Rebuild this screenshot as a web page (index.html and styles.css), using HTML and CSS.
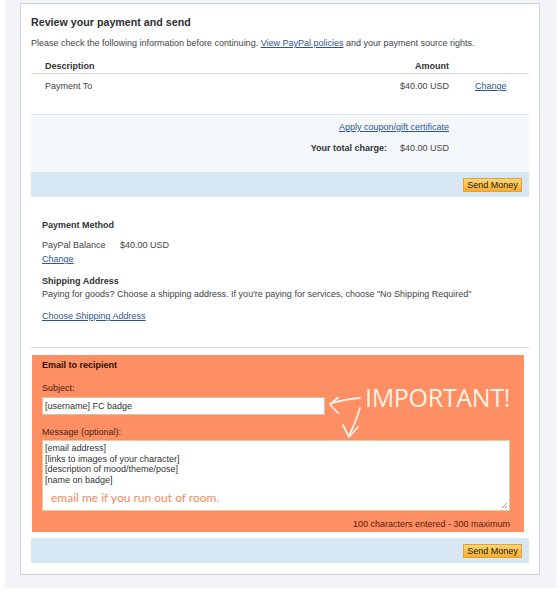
FILE: index.html
```html
<!DOCTYPE html>
<html>
<head>
<meta charset="utf-8">
<link rel="stylesheet" href="styles.css">
</head>
<body>
<div class="page">
  <div class="panel">
    <h1 class="title">Review your payment and send</h1>
    <p class="intro">Please check the following information before continuing. <a href="#">View PayPal policies</a> and your payment source rights.</p>

    <div class="row head">
      <div class="desc">Description</div>
      <div class="amt">Amount</div>
      <div class="act"></div>
    </div>
    <div class="row item">
      <div class="desc">Payment To</div>
      <div class="amt">$40.00 USD</div>
      <div class="act"><a href="#">Change</a></div>
    </div>

    <div class="summary">
      <div class="sum-line"><a href="#">Apply coupon/gift certificate</a></div>
      <div class="sum-line total"><span class="total-label">Your total charge:</span><span>$40.00 USD</span></div>
    </div>

    <div class="bar"><button class="btn">Send Money</button></div>

    <div class="method">
      <div class="sec-title">Payment Method</div>
      <div class="pm-line"><span class="pm-label">PayPal Balance</span><span>$40.00 USD</span></div>
      <div class="pm-line"><a href="#">Change</a></div>
      <div class="sec-title ship">Shipping Address</div>
      <div class="ship-text">Paying for goods? Choose a shipping address. If you're paying for services, choose "No Shipping Required"</div>
      <div class="ship-link"><a href="#">Choose Shipping Address</a></div>
    </div>

    <div class="divider"></div>

    <div class="email">
      <div class="email-title">Email to recipient</div>
      <div class="label subj">Subject:</div>
      <div class="input">[username] FC badge</div>
      <div class="label msg">Message (optional):</div>
      <div class="textarea">
        <div>[email address]</div>
        <div>[links to images of your character]</div>
        <div>[description of mood/theme/pose]</div>
        <div>[name on badge]</div>
        <div class="note">email me if you run out of room.</div>
        <svg class="grip" width="8" height="8" viewBox="0 0 8 8"><path d="M7 2 L2 7 M7 5 L5 7" stroke="#9a9a9a" stroke-width="1"/></svg>
      </div>
      <div class="counter">100 characters entered - 300 maximum</div>

      <svg class="arrows" width="40" height="48" viewBox="0 0 40 48">
        <path d="M35 4 Q20 5 6 9.5" />
        <path d="M13 3.5 L5 10.5 L13 19" />
        <path d="M35 14 Q31 28 24 42" />
        <path d="M18 31 L24 43 L33 33" />
      </svg>
      <div class="important">IMPORTANT!</div>
    </div>

    <div class="bar bar2"><button class="btn">Send Money</button></div>
  </div>
</div>
</body>
</html>
```

FILE: styles.css
```css
html, body {
  margin: 0;
  padding: 0;
  background: #ffffff;
}
body {
  font-family: "Liberation Sans", Arial, sans-serif;
  font-size: 9px;
  color: #444444;
}
a {
  color: #2f5590;
  text-decoration: underline;
}
.page {
  margin-left: 5px;
  width: 552px;
  box-sizing: border-box;
  background: #f3f4f7;
  padding: 3px 16px 13px 15px;
}
.panel {
  width: 520px;
  box-sizing: border-box;
  background: #ffffff;
  border: 1px solid #cfd4dc;
  padding: 0 10px 11px 10px;
}
.title {
  margin: 12px 0 0 0;
  font-size: 10.7px;
  line-height: 13px;
  font-weight: bold;
  color: #2e2e2e;
}
.intro {
  margin: 8px 0 0 0;
  line-height: 12px;
}
.row {
  display: flex;
  align-items: center;
}
.row .desc {
  flex: 1;
  padding-left: 14px;
}
.row .amt {
  text-align: right;
}
.row .act {
  width: 54px;
  padding-left: 26px;
}
.head {
  margin-top: 10px;
  height: 14px;
  line-height: 14px;
  font-weight: bold;
  color: #333333;
  border-bottom: 1px solid #d9dde3;
}
.item {
  height: 40px;
  align-items: flex-start;
  padding-top: 6px;
  box-sizing: border-box;
  line-height: 12px;
}
.summary {
  border-top: 1px solid #dfe5ec;
  background: #f4f8fb;
  padding: 6px 80px 18px 0;
}
.sum-line {
  display: flex;
  justify-content: flex-end;
  line-height: 12px;
}
.total {
  margin-top: 9px;
  gap: 13px;
}
.total-label {
  font-weight: bold;
  color: #333333;
}
.bar {
  height: 25px;
  background: #d7e6f3;
  display: flex;
  align-items: center;
  justify-content: flex-end;
  padding-right: 7px;
}
.btn {
  height: 14px;
  width: 59px;
  padding: 0;
  border: 1px solid #e1a13c;
  background: linear-gradient(#ffd775, #f7ac2b);
  font-family: "Liberation Sans", Arial, sans-serif;
  font-size: 9px;
  line-height: 12px;
  color: #222222;
  cursor: pointer;
}
.method {
  padding-left: 11px;
  padding-top: 22px;
}
.sec-title {
  font-weight: bold;
  color: #333333;
  line-height: 12px;
}
.pm-line {
  line-height: 14px;
}
.pm-line:nth-of-type(2) {
  margin-top: 7px;
}
.pm-label {
  display: inline-block;
  width: 78px;
}
.ship {
  margin-top: 9px;
  line-height: 13px;
}
.ship-text {
  line-height: 13px;
}
.ship-link {
  margin-top: 9px;
  line-height: 12px;
}
.divider {
  margin-top: 25px;
  height: 1px;
  background: #d9dde3;
}
.email {
  position: relative;
  margin: 7px 5px 0 1px;
  background: #fe8e63;
  padding: 4px 14px 2px 10px;
}
.email-title {
  font-weight: bold;
  color: #2a1207;
  line-height: 12px;
}
.label {
  color: #4a2312;
  line-height: 12px;
}
.subj {
  margin-top: 11px;
}
.input {
  margin-top: 3px;
  width: 283px;
  height: 18px;
  box-sizing: border-box;
  background: #ffffff;
  border: 1px solid #d8c2ae;
  padding-left: 2px;
  line-height: 16px;
  color: #333333;
}
.msg {
  margin-top: 11px;
}
.textarea {
  position: relative;
  margin-top: 2px;
  height: 71px;
  box-sizing: border-box;
  background: #ffffff;
  border: 1px solid #e7c99a;
  padding: 2px 2px;
  line-height: 10.6px;
  color: #333333;
}
.note {
  margin-top: 5px;
  padding-left: 6px;
  font-family: Lato, "Open Sans", sans-serif;
  font-size: 12px;
  line-height: 16px;
  color: #f08a5c;
}
.grip {
  position: absolute;
  right: 1px;
  bottom: 1px;
}
.counter {
  margin-top: 7px;
  text-align: right;
  line-height: 12px;
  color: #5a1e0a;
}
.arrows {
  position: absolute;
  left: 293px;
  top: 39px;
  fill: none;
  stroke: #fff3e6;
  stroke-width: 1.8;
  stroke-linecap: round;
  stroke-linejoin: round;
}
.important {
  position: absolute;
  left: 333px;
  top: 30px;
  font-family: "Open Sans", "Liberation Sans", sans-serif;
  font-weight: 400;
  font-size: 25px;
  line-height: 25px;
  letter-spacing: -0.3px;
  color: #fff3e6;
  white-space: nowrap;
}
.bar2 {
  margin-top: 6px;
}
```
